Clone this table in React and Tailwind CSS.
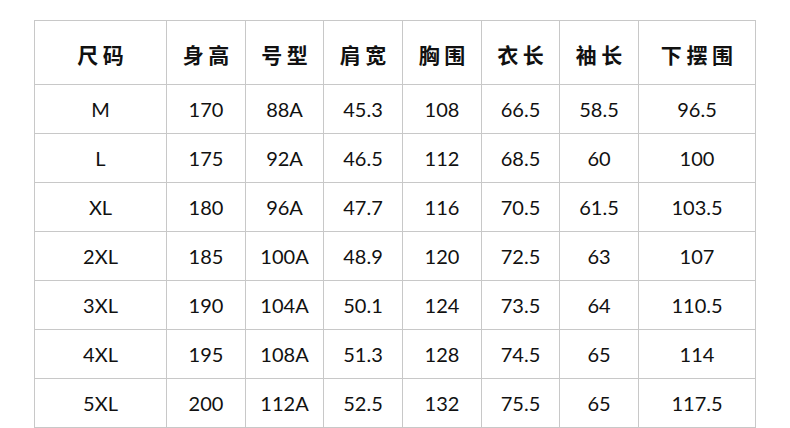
import React from "react";

const headers = ["尺码", "身高", "号型", "肩宽", "胸围", "衣长", "袖长", "下摆围"];
const rows = [
  ["M", "170", "88A", "45.3", "108", "66.5", "58.5", "96.5"],
  ["L", "175", "92A", "46.5", "112", "68.5", "60", "100"],
  ["XL", "180", "96A", "47.7", "116", "70.5", "61.5", "103.5"],
  ["2XL", "185", "100A", "48.9", "120", "72.5", "63", "107"],
  ["3XL", "190", "104A", "50.1", "124", "73.5", "64", "110.5"],
  ["4XL", "195", "108A", "51.3", "128", "74.5", "65", "114"],
  ["5XL", "200", "112A", "52.5", "132", "75.5", "65", "117.5"],
];
const widths = ["w-[132px]", "w-[79px]", "w-[78px]", "w-[79px]", "w-[79px]", "w-[78px]", "w-[79px]", "w-[117px]"];

export default function App() {
  return (
    <div className="w-[790px] h-[428px] bg-white pt-[20px] pl-[34px]">
      <table className="border-collapse table-fixed w-[722px]">
        <colgroup>
          {widths.map((w, i) => (
            <col key={i} className={w} />
          ))}
        </colgroup>
        <thead>
          <tr className="h-[64px]">
            {headers.map((h, i) => (
              <th
                key={i}
                className="border border-[#c8c8c8] p-0 text-center align-middle font-bold text-[21px] leading-none text-[#111] tracking-[0.22em] pt-[4px] [font-family:'Noto_Sans_CJK_SC',sans-serif]"
              >
                <span className="mr-[-0.22em]">{h}</span>
              </th>
            ))}
          </tr>
        </thead>
        <tbody>
          {rows.map((r, ri) => (
            <tr key={ri} className="h-[49px]">
              {r.map((c, ci) => (
                <td
                  key={ci}
                  className="border border-[#c8c8c8] p-0 text-center align-middle text-[20px] text-[#111] [font-family:'Lato',sans-serif]"
                >
                  {c}
                </td>
              ))}
            </tr>
          ))}
        </tbody>
      </table>
    </div>
  );
}
